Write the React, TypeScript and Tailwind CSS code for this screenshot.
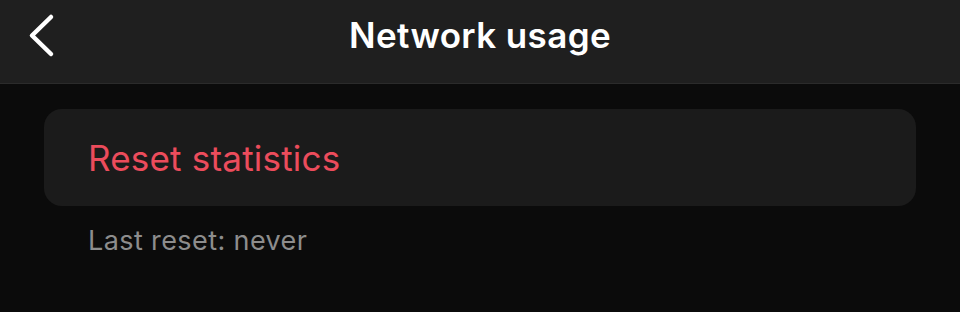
export default function App() {
  return (
    <div
      className="w-[960px] h-[312px] bg-[#0b0b0b] overflow-hidden"
      style={{ fontFamily: 'Inter, "Noto Sans", sans-serif' }}
    >
      <header className="relative h-[84px] bg-[#1f1f1f] border-b border-[#2b2b2b] flex justify-center pt-[18px]">
        <svg className="absolute left-0 top-0" width="70" height="70" viewBox="0 0 70 70" fill="none">
          <path d="M51 17 L32 35.5 L51 54" stroke="white" strokeWidth="4.5" strokeLinecap="round" strokeLinejoin="round" />
        </svg>
        <h1 className="text-white text-[35px] leading-none font-semibold tracking-[0.4px]">Network usage</h1>
      </header>
      <div className="px-[44px] pt-[25px]">
        <div className="h-[97px] rounded-[18px] bg-[#1b1b1b] flex items-center px-[44px] pt-[2px]">
          <span className="text-[#ec4c5c] text-[35px] leading-none tracking-[0.2px]">Reset statistics</span>
        </div>
        <p className="pl-[44px] pt-[21px] text-[#8d8d8d] text-[27px] leading-none tracking-[0.4px]">Last reset: never</p>
      </div>
    </div>
  )
}
